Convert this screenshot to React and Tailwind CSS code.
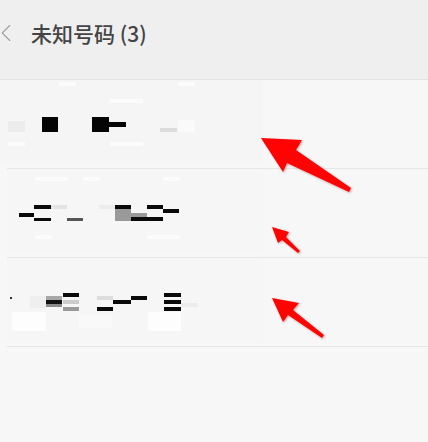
import { ChevronLeft } from 'lucide-react';

// censored (pixelated) contact rows: [x, y, w, h, fill]
const rows = [
  [
    [0, 0, 263, 84, '#f5f5f5'],
    [59, 2, 17, 4, '#fbfbfb'],
    [110, 19, 33, 4, '#fbfbfb'],
    [178, 2, 17, 4, '#fbfbfb'],
    [8, 41, 17, 11, '#ececec'],
    [42, 37, 16, 15, '#050505'],
    [92, 37, 17, 15, '#050505'],
    [109, 42, 17, 5, '#050505'],
    [160, 48, 17, 4, '#dcdcdc'],
    [178, 40, 17, 12, '#fafafa'],
    [110, 62, 33, 4, '#fbfbfb'],
    [8, 62, 17, 4, '#fbfbfb'],
  ],
  [
    [7, 0, 256, 84, '#f6f6f6'],
    [35, 8, 33, 4, '#fbfbfb'],
    [83, 8, 17, 4, '#fbfbfb'],
    [163, 8, 17, 4, '#fbfbfb'],
    [99, 36, 16, 4, '#ececec'],
    [51, 36, 16, 4, '#e3e3e3'],
    [19, 44, 15, 4, '#0a0a0a'],
    [34, 36, 17, 4, '#0a0a0a'],
    [34, 49, 17, 3, '#0a0a0a'],
    [67, 49, 16, 3, '#555555'],
    [115, 40, 16, 12, '#9a9a9a'],
    [131, 44, 16, 4, '#9a9a9a'],
    [115, 36, 16, 4, '#0a0a0a'],
    [131, 48, 32, 4, '#0a0a0a'],
    [147, 36, 16, 4, '#0a0a0a'],
    [163, 40, 16, 4, '#0a0a0a'],
    [35, 66, 17, 4, '#fbfbfb'],
    [147, 66, 33, 4, '#fbfbfb'],
  ],
  [
    [7, 0, 256, 84, '#f6f6f6'],
    [12, 54, 34, 19, '#fdfdfd'],
    [79, 56, 33, 14, '#f9f9f9'],
    [148, 54, 33, 19, '#fdfdfd'],
    [30, 38, 16, 12, '#efefef'],
    [181, 45, 17, 4, '#ececec'],
    [10, 39, 2, 2, '#333333'],
    [46, 38, 16, 4, '#a8a8a8'],
    [46, 42, 16, 4, '#111111'],
    [46, 46, 16, 3, '#8a8a8a'],
    [63, 35, 16, 4, '#0a0a0a'],
    [63, 42, 16, 4, '#cccccc'],
    [63, 49, 16, 4, '#9a9a9a'],
    [97, 38, 16, 4, '#dddddd'],
    [97, 49, 16, 4, '#0a0a0a'],
    [113, 42, 18, 4, '#0a0a0a'],
    [131, 38, 16, 4, '#0a0a0a'],
    [164, 35, 17, 4, '#0a0a0a'],
    [164, 42, 17, 4, '#0a0a0a'],
    [164, 49, 17, 4, '#0a0a0a'],
  ],
];

function Mosaic({ cells }) {
  return (
    <svg width="263" height="88" viewBox="0 0 263 88" className="block">
      {cells.map(([x, y, w, h, fill], i) => (
        <rect key={i} x={x} y={y} width={w} height={h} fill={fill} />
      ))}
    </svg>
  );
}

export default function App() {
  return (
    <div
      className="relative w-[428px] h-[442px] overflow-hidden bg-[#f7f7f7]"
      style={{ fontFamily: '"Noto Sans CJK SC", "Noto Sans", sans-serif' }}
    >
      {/* Header */}
      <div className="h-[80px] bg-[#efefef] flex items-start pt-[18px] border-b border-[#e3e3e3]">
        <ChevronLeft className="w-[30px] h-[30px] text-[#a0a0a0] -ml-[9px] shrink-0" strokeWidth={0.9} />
        <h1 className="ml-[10px] text-[21px] leading-[30px] font-medium text-[#444]">未知号码 (3)</h1>
      </div>

      {/* Rows */}
      {rows.map((cells, i) => (
        <div key={i}>
          <div className="h-[88px]">
            <Mosaic cells={cells} />
          </div>
          <div className="ml-[7px] h-px bg-[#e6e6e6]" />
        </div>
      ))}

      {/* Annotation arrows */}
      <svg
        className="absolute inset-0 pointer-events-none"
        width="428"
        height="442"
        viewBox="0 0 428 442"
        style={{ filter: 'drop-shadow(1px 1px 1px rgba(120,0,0,0.35))' }}
      >
        <polygon
          points="261,138 302,140 296,150 351,188 349,192 287,163 283,172"
          fill="#ff0202"
        />
        <polygon
          points="272,227 289,232 286,237 300,251 298,253 282,240 278,243"
          fill="#ff0202"
        />
        <polygon
          points="272,298 299,303 293,310 324,335 322,338 288,315 283,322"
          fill="#ff0202"
        />
      </svg>
    </div>
  );
}
